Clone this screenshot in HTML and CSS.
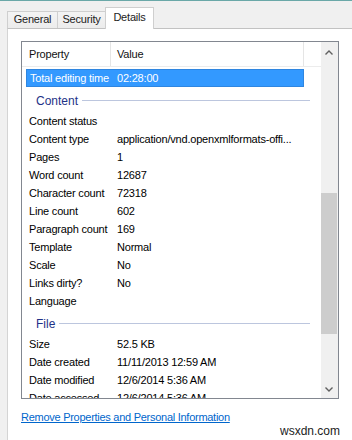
FILE: index.html
```html
<!DOCTYPE html>
<html>
<head>
<meta charset="utf-8">
<link rel="stylesheet" href="styles.css">
</head>
<body>
<div class="topline"></div>
<div class="tabs">
  <div class="tab">General</div>
  <div class="tab">Security</div>
  <div class="tab active">Details</div>
</div>
<div class="panel">
  <div class="listview">
    <div class="lv-main">
      <div class="lv-header">
        <div class="hcell c1">Property</div>
        <div class="hcell c2">Value</div>
      </div>
      <div class="lv-body">
        <div class="row sel"><span class="k">Total editing time</span><span class="v">02:28:00</span></div>
        <div class="group"><span class="gname">Content</span><span class="gline"></span></div>
        <div class="row"><span class="k">Content status</span><span class="v"></span></div>
        <div class="row"><span class="k">Content type</span><span class="v">application/vnd.openxmlformats-offi...</span></div>
        <div class="row"><span class="k">Pages</span><span class="v">1</span></div>
        <div class="row"><span class="k">Word count</span><span class="v">12687</span></div>
        <div class="row"><span class="k">Character count</span><span class="v">72318</span></div>
        <div class="row"><span class="k">Line count</span><span class="v">602</span></div>
        <div class="row"><span class="k">Paragraph count</span><span class="v">169</span></div>
        <div class="row"><span class="k">Template</span><span class="v">Normal</span></div>
        <div class="row"><span class="k">Scale</span><span class="v">No</span></div>
        <div class="row"><span class="k">Links dirty?</span><span class="v">No</span></div>
        <div class="row"><span class="k">Language</span><span class="v"></span></div>
        <div class="group"><span class="gname">File</span><span class="gline"></span></div>
        <div class="row"><span class="k">Size</span><span class="v">52.5 KB</span></div>
        <div class="row"><span class="k">Date created</span><span class="v">11/11/2013 12:59 AM</span></div>
        <div class="row"><span class="k">Date modified</span><span class="v">12/6/2014 5:36 AM</span></div>
        <div class="row"><span class="k">Date accessed</span><span class="v">12/6/2014 5:36 AM</span></div>
      </div>
    </div>
    <div class="scrollbar">
      <div class="sbtn"><svg width="8" height="5" viewBox="0 0 8 5"><polyline points="0.5,4.5 4,1 7.5,4.5" fill="none" stroke="#606060" stroke-width="1.4"/></svg></div>
      <div class="track"><div class="thumb"></div></div>
      <div class="sbtn"><svg width="8" height="5" viewBox="0 0 8 5"><polyline points="0.5,0.5 4,4 7.5,0.5" fill="none" stroke="#606060" stroke-width="1.4"/></svg></div>
    </div>
  </div>
  <div class="linkrow"><a class="link" href="#">Remove Properties and Personal Information</a></div>
  <div class="watermark">wsxdn.com</div>
</div>
</body>
</html>
```
FILE: styles.css
```css
* { box-sizing: border-box; }
html, body { margin: 0; padding: 0; }
body {
  width: 352px;
  height: 440px;
  overflow: hidden;
  background: #f0f0f0;
  font-family: "Liberation Sans", Arial, sans-serif;
  font-size: 11px;
  letter-spacing: -0.2px;
  color: #000;
}
.topline { height: 1px; background: #6aa8a8; }
.tabs {
  display: flex;
  align-items: flex-end;
  height: 27px;
  padding-left: 7px;
}
.tab {
  width: 51px;
  height: 17px;
  margin-right: -1px;
  border: 1px solid #cfcfcf;
  border-bottom: none;
  background: linear-gradient(#f4f4f4, #ececec);
  color: #222;
  text-align: center;
  line-height: 15px;
}
.tab:nth-child(2) { width: 49px; }
.tab.active {
  width: 49px;
  height: 22px;
  margin-bottom: -1px;
  background: #fff;
  line-height: 19px;
  position: relative;
  z-index: 1;
}
.panel {
  margin-left: 7px;
  height: 412px;
  background: #fff;
  border-left: 1px solid #d4d4d4;
  border-top: 1px solid #c2c2c2;
  padding-top: 12px;
  padding-left: 13px;
}
.listview {
  width: 318px;
  height: 358px;
  border: 1px solid #828790;
  display: flex;
}
.lv-main {
  width: 299px;
  overflow: hidden;
}
.lv-header {
  display: flex;
  height: 25px;
  border-bottom: 1px solid #ececec;
}
.hcell {
  line-height: 24px;
  border-right: 1px solid #e5e5e5;
  color: #111;
}
.hcell.c1 { width: 89px; padding-left: 7px; }
.hcell.c2 { width: 193px; padding-left: 6px; }
.lv-body { padding-top: 2px; }
.row {
  display: flex;
  margin-left: 4px;
  width: 278px;
  height: 18px;
  line-height: 16px;
  border: 1px solid transparent;
  white-space: nowrap;
}
.row .k { width: 84px; padding-left: 2px; overflow: hidden; }
.row .v { flex: 1; padding-left: 6px; overflow: hidden; }
.row.sel {
  background: #3399ff;
  border-color: #2f86e0;
  color: #fff;
}
.row.sel .k { padding-left: 3px; }
.group {
  display: flex;
  align-items: center;
  gap: 4px;
  height: 25px;
  padding-top: 2px;
  margin-left: 4px;
  margin-right: 11px;
}
.gname {
  padding-left: 10px;
  font-size: 12px;
  letter-spacing: 0;
  color: #1e3287;
}
.gline { flex: 1; height: 1px; background: #bcc6de; }
.scrollbar {
  width: 17px;
  background: #f0f0f0;
  display: flex;
  flex-direction: column;
}
.sbtn {
  height: 17px;
  display: flex;
  align-items: center;
  justify-content: center;
  padding-right: 1px;
}
.sbtn:first-child { padding-top: 3px; }
.sbtn:last-child { padding-bottom: 1px; }
.track { flex: 1; }
.thumb {
  margin-top: 134px;
  width: 16px;
  height: 141px;
  background: #cdcdcd;
}
.linkrow { margin-top: 11px; line-height: 14px; }
.link { color: #0066cc; text-decoration: underline; letter-spacing: -0.27px; }
.watermark {
  text-align: right;
  padding-right: 12px;
  font-size: 12px;
  letter-spacing: 0;
  line-height: 15px;
  color: #222;
}
```
